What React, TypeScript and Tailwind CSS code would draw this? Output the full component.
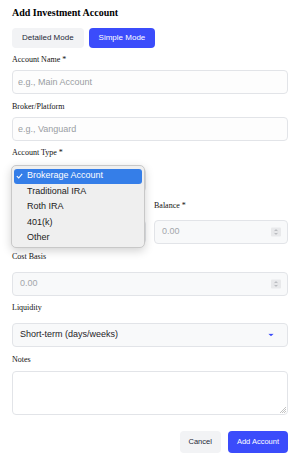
import React from 'react';

const labelCls =
  "block font-['Liberation_Serif','Times_New_Roman',serif] text-[8px] leading-[12px] text-[#111]";
const textInputCls =
  'block w-full h-[24px] rounded-[4px] border border-[#e2e4e8] bg-[#fdfdfd] px-[5px] text-[9px] text-[#111] placeholder:text-[#9a9da3] outline-none';
const boxCls =
  'relative flex w-full h-[24px] items-center rounded-[4px] border border-[#e2e4e8] bg-[#f8f9fa] px-[7px] text-[9px]';

const accountTypes = ['Brokerage Account', 'Traditional IRA', 'Roth IRA', '401(k)', 'Other'];

function Spinner() {
  return (
    <span className="absolute right-[6px] top-1/2 -translate-y-1/2 flex h-[9px] w-[10px] items-center justify-center rounded-[1px] bg-[#e8e9eb]">
      <svg viewBox="0 0 10 9" className="h-[9px] w-[10px]">
        <path d="M3.6 3.6 L5 2.2 L6.4 3.6 M3.6 5.4 L5 6.8 L6.4 5.4" fill="none" stroke="#8b8e94" strokeWidth="0.7" />
      </svg>
    </span>
  );
}

function NumberBox() {
  return (
    <div className={boxCls}>
      <span className="text-[#a3a6ab]">0.00</span>
      <Spinner />
    </div>
  );
}

export default function App() {
  return (
    <div className="relative w-[300px] h-[461px] bg-white px-[12px] pt-[6px] font-['Liberation_Sans',Arial,sans-serif]">
      <h2 className="font-['Liberation_Serif','Times_New_Roman',serif] text-[10px] leading-[14px] font-bold text-black">
        Add Investment Account
      </h2>

      {/* Mode toggle */}
      <div className="mt-[8px] flex gap-[5px]">
        <button className="h-[20px] rounded-[4px] bg-[#f2f3f5] px-[10px] text-[8px] font-medium text-[#1f2937]">
          Detailed Mode
        </button>
        <button className="h-[20px] rounded-[4px] bg-[#3b4cfb] px-[10px] text-[8px] font-medium text-white">
          Simple Mode
        </button>
      </div>

      <label className={`${labelCls} mt-[6px] mb-[4px]`}>Account Name *</label>
      <input className={textInputCls} placeholder="e.g., Main Account" />

      <label className={`${labelCls} mt-[7px] mb-[4px]`}>Broker/Platform</label>
      <input className={textInputCls} placeholder="e.g., Vanguard" />

      <label className={`${labelCls} mt-[6px] mb-[9px]`}>Account Type *</label>
      <div className="h-[24px] w-[134px] rounded-[4px] border border-[#e2e4e8] bg-[#f8f9fa]" />

      <div className="mt-[8px] grid grid-cols-2 gap-x-[8px]">
        <div>
          <div className="h-[12px] mb-[8px]" />
          <div className="h-[24px] rounded-[4px] border border-[#e2e4e8] bg-[#f8f9fa]" />
        </div>
        <div>
          <label className={`${labelCls} mb-[8px]`}>Balance *</label>
          <NumberBox />
        </div>
      </div>

      <label className={`${labelCls} mt-[7px] mb-[9px]`}>Cost Basis</label>
      <NumberBox />

      <label className={`${labelCls} mt-[6px] mb-[9px]`}>Liquidity</label>
      <div className={boxCls}>
        <span className="text-[#1f2328]">Short-term (days/weeks)</span>
        <svg viewBox="0 0 6 3" className="absolute right-[13px] top-1/2 -translate-y-1/2 h-[3px] w-[6px]">
          <path d="M0.3 0.2 L5.7 0.2 L3 2.8 Z" fill="#3b4cfb" />
        </svg>
      </div>

      <label className={`${labelCls} mt-[7px] mb-[5px]`}>Notes</label>
      <div className="relative">
        <textarea className="block w-full h-[44px] resize-none rounded-[4px] border border-[#e2e4e8] bg-white px-[5px] py-[4px] text-[9px] outline-none" />
        <svg viewBox="0 0 7 7" className="absolute right-[2px] bottom-[2px] h-[7px] w-[7px]">
          <path d="M1 7 L7 1 M3 7 L7 3 M5 7 L7 5" stroke="#9a9a9a" strokeWidth="0.6" />
        </svg>
      </div>

      <div className="mt-[16px] flex justify-end gap-[7px]">
        <button className="h-[22px] rounded-[4px] bg-[#f2f3f5] px-[9px] text-[7.5px] font-medium text-[#1f2937]">
          Cancel
        </button>
        <button className="h-[22px] rounded-[4px] bg-[#3b4cfb] px-[9px] text-[7.5px] font-medium text-white">
          Add Account
        </button>
      </div>

      {/* Open native-style dropdown for Account Type */}
      <div className="absolute left-[11px] top-[165px] w-[134px] h-[83px] rounded-[5px] border border-[#c8c8c8] bg-[#efefef] px-[2px] py-[2.5px] shadow-[0_3px_10px_rgba(0,0,0,0.18)]">
        {accountTypes.map((t, i) => (
          <div
            key={t}
            className={`relative flex h-[15.4px] items-center rounded-[3px] pl-[13px] text-[9px] ${
              i === 0 ? 'bg-[#357ee8] text-white' : 'text-[#222]'
            }`}
          >
            {i === 0 && (
              <svg viewBox="0 0 7 6" className="absolute left-[2px] top-1/2 -translate-y-1/2 h-[6px] w-[7px]">
                <path d="M0.8 3.2 L2.7 5 L6.2 0.8" fill="none" stroke="white" strokeWidth="1.1" />
              </svg>
            )}
            {t}
          </div>
        ))}
      </div>
    </div>
  );
}
